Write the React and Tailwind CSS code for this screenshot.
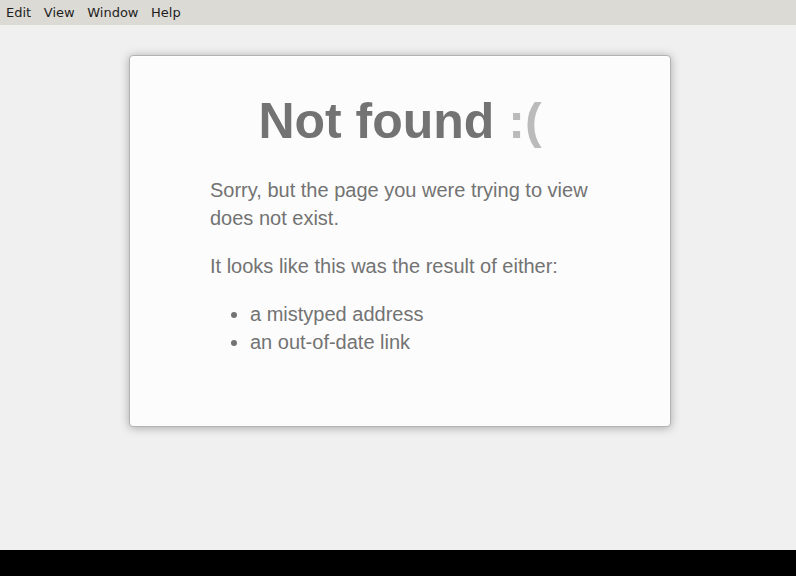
import React from 'react';

const menus = ['Edit', 'View', 'Window', 'Help'];

const App = () => {
    return (
        <div className="h-[576px] w-[796px] flex flex-col overflow-hidden">
            <div className="h-[25px] bg-[#dcdad5] flex items-center pl-[6px] gap-[12.6px] font-['DejaVu_Sans',sans-serif] text-[13px] text-[#1e1e1e] shrink-0">
                {menus.map((m) => (
                    <span key={m} className="leading-[25px]">{m}</span>
                ))}
            </div>

            <main className="flex-1 bg-[#f0f0f0] pt-[30px] font-['Liberation_Sans',Arial,sans-serif] text-[20px] leading-[1.4] text-[#737373]">
                <div className="ml-[129px] w-[542px] box-border bg-[#fcfcfc] border border-[#b3b3b3] rounded pt-[30px] px-[20px] pb-[50px] shadow-[0_1px_10px_#a7a7a7,inset_0_1px_0_#fff]">
                    <h1 className="mx-[10px] text-[50px] leading-[1.4] font-bold text-center">
                        Not found <span className="text-[#bbb]">:(</span>
                    </h1>
                    <div className="max-w-[380px] mx-auto">
                        <p className="my-[20px]">Sorry, but the page you were trying to view does not exist.</p>
                        <p className="my-[20px]">It looks like this was the result of either:</p>
                        <ul className="my-[20px] pl-[40px] list-disc">
                            <li>a mistyped address</li>
                            <li>an out-of-date link</li>
                        </ul>
                    </div>
                </div>
            </main>

            <div className="h-[26px] bg-black shrink-0" />
        </div>
    );
};

export default App;
